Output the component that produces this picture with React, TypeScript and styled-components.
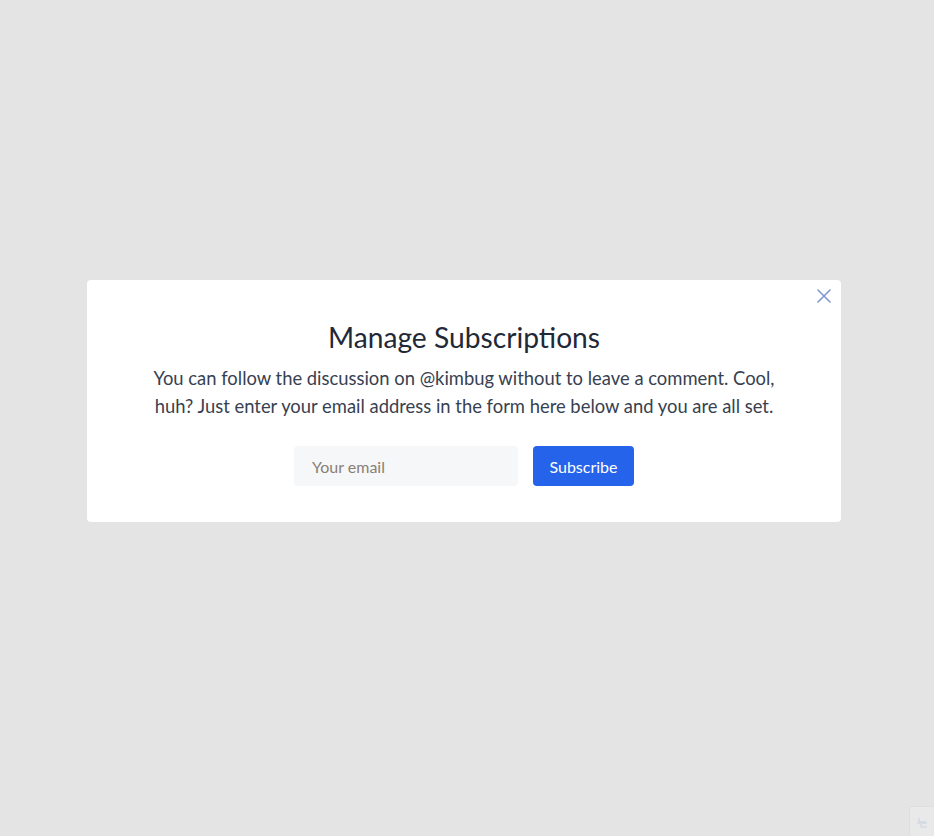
import styled, { createGlobalStyle } from 'styled-components';

const GlobalStyle = createGlobalStyle`
  html, body {
    margin: 0;
    padding: 0;
    background: #e4e4e4;
  }
  body {
    font-family: 'Nunito', 'Lato', 'Open Sans', sans-serif;
  }
`;

const Overlay = styled.div`
  min-height: 836px;
  display: flex;
  justify-content: center;
  align-items: flex-start;
  padding: 280px 93px 0 87px;
  box-sizing: border-box;
`;

const Modal = styled.div`
  position: relative;
  width: 754px;
  height: 242px;
  box-sizing: border-box;
  background: #ffffff;
  border-radius: 4px;
  padding: 40px 40px 0;
  display: flex;
  flex-direction: column;
  align-items: center;
`;

const CloseButton = styled.button`
  position: absolute;
  top: 8px;
  right: 9px;
  width: 16px;
  height: 16px;
  padding: 0;
  border: 0;
  background: transparent;
  color: #7f98d4;
  cursor: pointer;
  display: flex;
  align-items: center;
  justify-content: center;
`;

const Title = styled.h2`
  margin: 0;
  font-family: 'Lato', sans-serif;
  font-weight: 400;
  font-size: 28.2px;
  line-height: 34px;
  color: #1f2937;
`;

const Text = styled.p`
  margin: 10px 0 0;
  width: 640px;
  text-align: center;
  font-family: 'Lato', sans-serif;
  font-size: 18.4px;
  line-height: 28px;
  color: #374151;
`;

const Form = styled.form`
  margin-top: 26px;
  display: flex;
  gap: 15px;
`;

const EmailInput = styled.input`
  width: 224px;
  height: 40px;
  box-sizing: border-box;
  border: 0;
  border-radius: 4px;
  background: #f6f7f9;
  padding: 0 18px;
  font-family: 'Lato', sans-serif;
  font-size: 16px;
  color: #374151;
  outline: none;
  &::placeholder {
    color: #8a7f74;
  }
`;

const SubmitButton = styled.button`
  width: 101px;
  height: 40px;
  border: 0;
  border-radius: 4px;
  background: #2563eb;
  color: #ffffff;
  font-family: 'Lato', sans-serif;
  font-size: 16px;
  cursor: pointer;
`;

const CornerWidget = styled.div`
  position: fixed;
  right: 0;
  bottom: 0;
  width: 24px;
  height: 29px;
  background: #e9e9e9;
  border-top: 1px solid #dedede;
  border-left: 1px solid #dedede;
  display: flex;
  align-items: center;
  justify-content: center;
`;

export default function App() {
  return (
    <>
      <GlobalStyle />
      <Overlay>
        <Modal>
          <CloseButton aria-label='Close'>
            <svg width='14' height='14' viewBox='0 0 14 14' fill='none'>
              <path d='M1 1L13 13M13 1L1 13' stroke='currentColor' strokeWidth='1.6' strokeLinecap='round' />
            </svg>
          </CloseButton>
          <Title>Manage Subscriptions</Title>
          <Text>
            You can follow the discussion on @kimbug without to leave a comment. Cool, huh? Just enter your email
            address in the form here below and you are all set.
          </Text>
          <Form onSubmit={(e) => e.preventDefault()}>
            <EmailInput type='email' placeholder='Your email' />
            <SubmitButton type='submit'>Subscribe</SubmitButton>
          </Form>
        </Modal>
      </Overlay>
      <CornerWidget>
        <svg width='12' height='12' viewBox='0 0 12 12' fill='none' stroke='#c9d3e0' strokeWidth='1'>
          <path d='M3 2v4h7M1 7h10M5 8v3h6' />
        </svg>
      </CornerWidget>
    </>
  );
}
